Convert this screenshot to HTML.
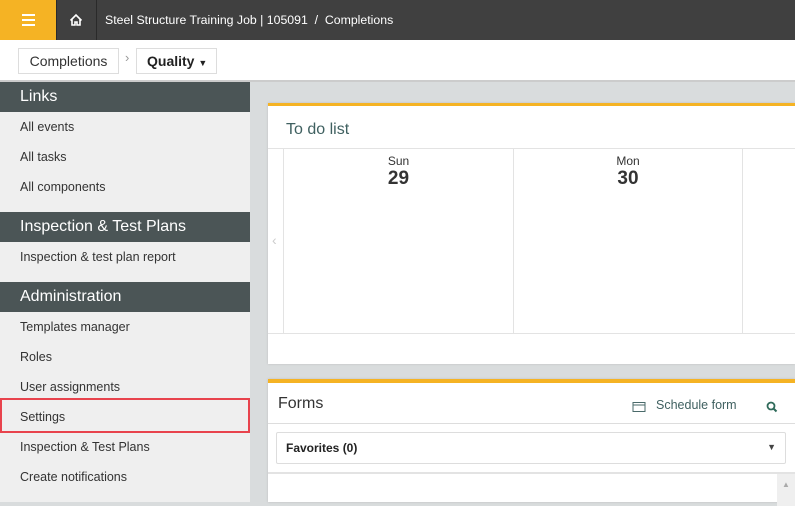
<!DOCTYPE html><html><head><style>
*{box-sizing:border-box;margin:0;padding:0}
body{width:795px;height:502px;overflow:hidden;font-family:"Liberation Sans",sans-serif;background:#d9dcdd;position:relative}
.a{position:absolute}
.top{left:0;top:0;width:795px;height:40px;background:#404040}
.sb .h{position:absolute;left:0;width:250px;height:30px;background:#4b5556;color:#fff;font-size:16px;padding:6px 20px}
.sb .i{position:absolute;left:20px;font-size:12.5px;color:#333}
</style></head><body>
<div class="a top"></div>
<div class="a" style="left:0;top:0;width:56px;height:40px;background:#f5b324"></div>
<div class="a" style="left:22px;top:14px;width:13px;height:2px;background:#fff;box-shadow:0 5px 0 #fff,0 10px 0 #fff"></div>
<div class="a" style="left:56px;top:0;width:1px;height:40px;background:#2a2a2a"></div>
<div class="a" style="left:96px;top:0;width:1px;height:40px;background:#2a2a2a"></div>
<svg class="a" style="left:69px;top:13px" width="14" height="14" viewBox="0 0 14 14"><path d="M1.5 7.5L7 2l5.5 5.5M3 6.5V12h3V9h2v3h3V6.5" fill="none" stroke="#fff" stroke-width="1.6"/></svg>
<div class="a" style="left:105px;top:13px;color:#fff;font-size:12.3px">Steel Structure Training Job | 105091 &nbsp;/&nbsp; Completions</div>
<div class="a" style="left:0;top:40px;width:795px;height:42px;background:#fff;border-bottom:2px solid #ccc"></div>
<div class="a" style="left:18px;top:48px;width:101px;height:26px;border:1px solid #ddd;font-size:14px;color:#333;text-align:center;line-height:24px">Completions</div>
<div class="a" style="left:125px;top:50px;color:#999;font-size:13px">›</div>
<div class="a" style="left:136px;top:48px;width:81px;height:26px;border:1px solid #ddd;font-size:14px;font-weight:bold;color:#222;padding-left:10px;line-height:24px">Quality <span style="font-size:9px">▼</span></div>
<div class="a sb" style="left:0;top:82px;width:250px;height:420px;background:#efefef">
<div class="h" style="top:0">Links</div>
<div class="i" style="top:38px">All events</div>
<div class="i" style="top:68px">All tasks</div>
<div class="i" style="top:98px">All components</div>
<div class="h" style="top:130px">Inspection &amp; Test Plans</div>
<div class="i" style="top:168px">Inspection &amp; test plan report</div>
<div class="h" style="top:200px">Administration</div>
<div class="i" style="top:238px">Templates manager</div>
<div class="i" style="top:268px">Roles</div>
<div class="i" style="top:298px">User assignments</div>
<div class="a" style="left:0;top:316px;width:250px;height:35px;border:2px solid #e8434d"></div>
<div class="i" style="top:328px">Settings</div>
<div class="i" style="top:358px">Inspection &amp; Test Plans</div>
<div class="i" style="top:388px">Create notifications</div>
</div>
<div class="a" style="left:268px;top:103px;width:527px;height:261px;background:#fff;border-top:3px solid #f5b324;box-shadow:0 0 2px #bbb">
<div class="a" style="left:18px;top:15px;font-size:16px;color:#3f6060">To do list</div>
<div class="a" style="left:0;top:42px;width:527px;height:1px;background:#e3e3e3"></div>
<div class="a" style="left:0;top:227px;width:527px;height:1px;background:#e3e3e3"></div>
<div class="a" style="left:15px;top:42px;width:1px;height:185px;background:#e3e3e3"></div>
<div class="a" style="left:245px;top:42px;width:1px;height:185px;background:#e3e3e3"></div>
<div class="a" style="left:474px;top:42px;width:1px;height:185px;background:#e3e3e3"></div>
<div class="a" style="left:4px;top:126px;color:#ccc;font-size:14px">‹</div>
<div class="a" style="left:16px;top:48px;width:229px;text-align:center;color:#333;font-size:12px">Sun<br><b style="font-size:19px">29</b></div>
<div class="a" style="left:246px;top:48px;width:228px;text-align:center;color:#333;font-size:12px">Mon<br><b style="font-size:19px">30</b></div>
</div>
<div class="a" style="left:268px;top:379px;width:527px;height:123px;background:#fff;border-top:4px solid #f5b324;box-shadow:0 0 2px #bbb">
<div class="a" style="left:10px;top:12px;font-size:16px;color:#333">Forms</div>
<svg class="a" style="left:364px;top:18px" width="14" height="12"><rect x="1" y="1.5" width="12" height="9" fill="none" stroke="#4a6a6a"/><line x1="1" y1="4" x2="13" y2="4" stroke="#4a6a6a"/></svg>
<div class="a" style="left:388px;top:15px;font-size:12.5px;color:#3f6060">Schedule form</div>
<svg class="a" style="left:498px;top:18px" width="12" height="12"><circle cx="5" cy="5" r="3.5" fill="none" stroke="#2f6a5a" stroke-width="1.8"/><line x1="7.5" y1="7.5" x2="10.5" y2="10.5" stroke="#2f6a5a" stroke-width="2"/></svg>
<div class="a" style="left:0;top:40px;width:527px;height:1px;background:#ddd"></div>
<div class="a" style="left:8px;top:49px;width:510px;height:32px;border:1px solid #ddd;border-radius:2px;font-size:12px;font-weight:bold;color:#222;padding:8px 9px">Favorites (0)<span style="position:absolute;right:9px;top:9px;font-size:9px;color:#444">▼</span></div>
<div class="a" style="left:0;top:89px;width:527px;height:2px;background:#e3e3e3"></div>
<div class="a" style="left:509px;top:91px;width:18px;height:32px;background:#efefef;color:#aaa;font-size:8px;text-align:center;padding-top:6px">▲</div>
</div>
</body></html>
